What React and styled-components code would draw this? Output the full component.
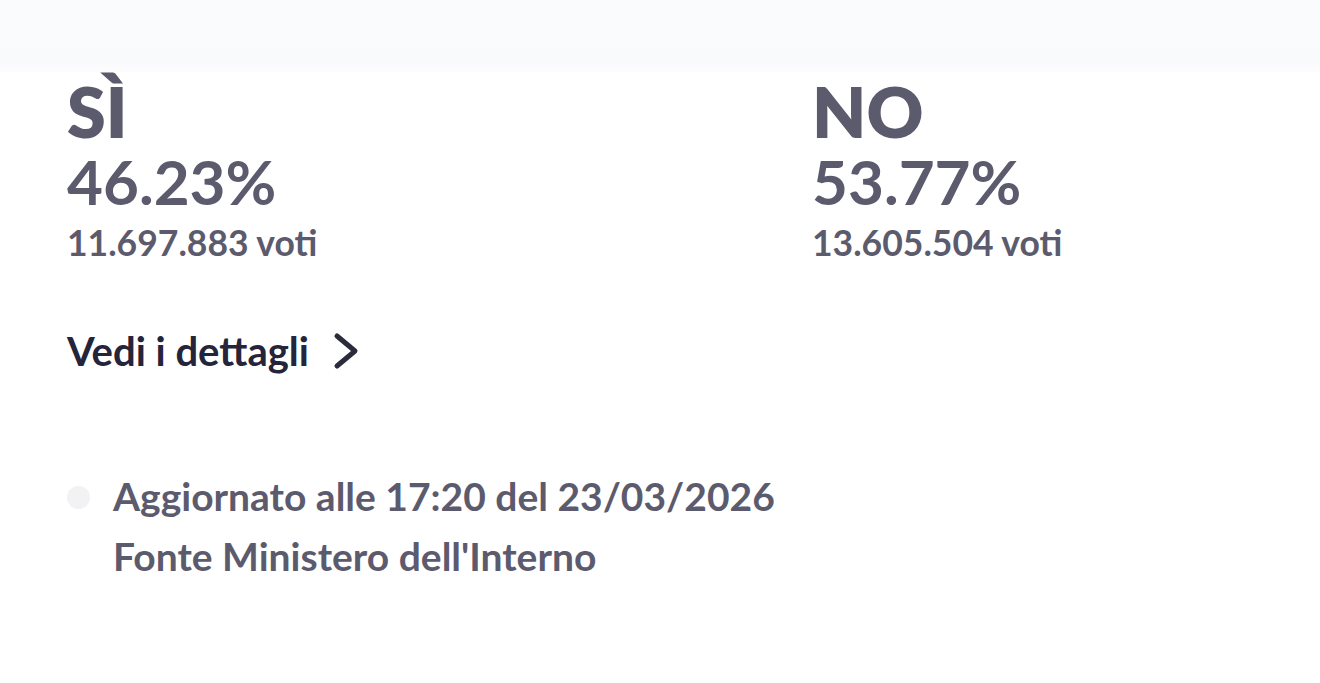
import React from 'react';
import styled, { createGlobalStyle } from 'styled-components';

const GlobalStyle = createGlobalStyle`
  html, body {
    margin: 0;
    padding: 0;
    background: #ffffff;
  }
  body {
    font-family: Lato, 'Noto Sans', sans-serif;
    color: #5c5b6d;
  }
`;

//상단 흐린 띠
const TopBand = styled.div`
  height: 72px;
  background: linear-gradient(#fafbfd, #f9fafc 85%, #fdfdfe);
`;

const Page = styled.main`
  padding: 6px 0 0 67px;
`;

const Results = styled.section`
  display: grid;
  grid-template-columns: 745px 1fr;
`;

const Option = styled.div`
  display: flex;
  flex-direction: column;
`;

const Label = styled.h2`
  margin: 0;
  font-size: 70px;
  font-weight: 800;
  line-height: 66px;
  color: #5c5b6e;
`;

const Percent = styled.div`
  margin-top: 6px;
  font-size: 62px;
  font-weight: 700;
  line-height: 62px;
  color: #5c5b6e;
`;

const Votes = styled.div`
  margin-top: 8px;
  font-size: 35.5px;
  font-weight: 700;
  line-height: 46px;
  color: #5c5b6e;
`;

const DetailsLink = styled.a`
  display: inline-flex;
  align-items: center;
  gap: 24px;
  margin-top: 60px;
  font-size: 40px;
  font-weight: 700;
  line-height: 50px;
  color: #24243a;
  text-decoration: none;
`;

const Footer = styled.div`
  display: flex;
  align-items: flex-start;
  gap: 23px;
  margin-top: 90px;
`;

const Dot = styled.span`
  flex: none;
  width: 23px;
  height: 23px;
  margin-top: 20px;
  border-radius: 50%;
  background: #f2f2f4;
`;

const Info = styled.div`
  font-size: 39px;
  font-weight: 700;
  line-height: 60px;
  color: #5c5b6e;
`;

const Chevron = () => (
  <svg width="26" height="38" viewBox="0 0 26 38" fill="none">
    <path d="M4 4l18 15L4 34" stroke="#2b2b3b" strokeWidth="5" strokeLinecap="round" strokeLinejoin="round" />
  </svg>
);

export default function App() {
  return (
    <>
      <GlobalStyle />
      <TopBand />
      <Page>
        <Results>
          <Option>
            <Label>SÌ</Label>
            <Percent>46.23%</Percent>
            <Votes>11.697.883 voti</Votes>
          </Option>
          <Option>
            <Label>NO</Label>
            <Percent>53.77%</Percent>
            <Votes>13.605.504 voti</Votes>
          </Option>
        </Results>
        <DetailsLink href="#">
          Vedi i dettagli
          <Chevron />
        </DetailsLink>
        <Footer>
          <Dot />
          <Info>
            Aggiornato alle 17:20 del 23/03/2026
            <br />
            Fonte Ministero dell'Interno
          </Info>
        </Footer>
      </Page>
    </>
  );
}
